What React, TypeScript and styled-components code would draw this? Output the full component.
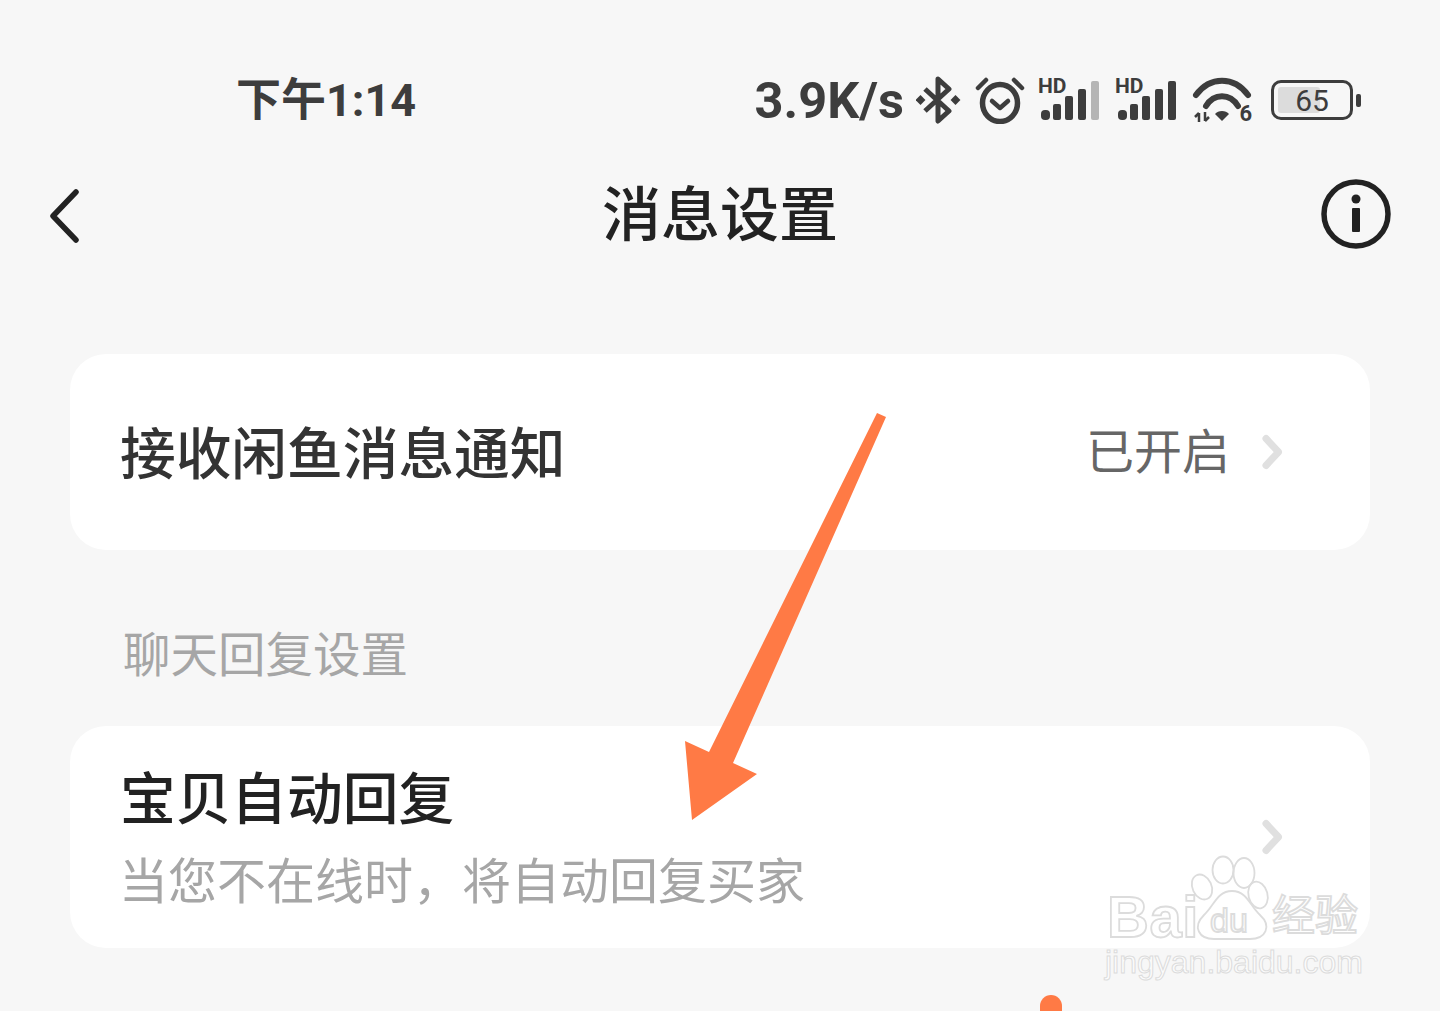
import styled, { createGlobalStyle } from "styled-components";

const GlobalStyle = createGlobalStyle`
  html, body {
    margin: 0;
    padding: 0;
    background: #f7f7f7;
  }
  body {
    font-family: "Noto Sans CJK SC", "Noto Sans", sans-serif;
  }
`;

const App = () => {
  return (
    <Page>
      <GlobalStyle />
      <StatusBar>
        <Time>下午1:14</Time>
        <StatusRight>
          <Speed>3.9K/s</Speed>
          <BluetoothIcon />
          <AlarmIcon />
          <SignalIcon dim />
          <SignalIcon />
          <WifiIcon />
          <Battery>
            <BatteryFill />
            <BatteryText>65</BatteryText>
          </Battery>
          <BatteryCap />
        </StatusRight>
      </StatusBar>

      <NavBar>
        <svg width="34" height="58" viewBox="0 0 34 58">
          <path d="M27 7 L4 31 L27 55" fill="none" stroke="#222" strokeWidth="5.5" strokeLinecap="round" strokeLinejoin="round" />
        </svg>
        <Title>消息设置</Title>
        <InfoSlot>
          <svg width="70" height="70" viewBox="0 0 70 70">
            <circle cx="35" cy="35" r="32" fill="none" stroke="#222" strokeWidth="5.5" />
            <circle cx="35" cy="20" r="4.5" fill="#222" />
            <rect x="31" y="29" width="8" height="24" rx="1" fill="#222" />
          </svg>
        </InfoSlot>
      </NavBar>

      <Card $height={196} $top={86}>
        <RowTitle>接收闲鱼消息通知</RowTitle>
        <RowRight>
          <RowValue>已开启</RowValue>
          <Chevron />
        </RowRight>
      </Card>

      <SectionLabel>聊天回复设置</SectionLabel>

      <Card $height={222} $top={0}>
        <RowText>
          <RowTitle $dark>宝贝自动回复</RowTitle>
          <RowDesc>当您不在线时，将自动回复买家</RowDesc>
        </RowText>
        <Chevron />
      </Card>

      <Overlay width="1440" height="1011" viewBox="0 0 1440 1011">
        <polygon points="877,413 886,417 733,763 757,774 692,820 685,741 709,752" fill="#ff7a45" />
        <circle cx="1051" cy="1006" r="11" fill="#ff7a45" />
        <rect x="1040" y="1006" width="22" height="6" fill="#ff7a45" />
        <g fill="none" stroke="#dcdcdc" strokeWidth="1.8">
          <ellipse cx="1202" cy="887" rx="9.5" ry="13" transform="rotate(-25 1202 887)" />
          <ellipse cx="1223" cy="870" rx="10.5" ry="13.5" />
          <ellipse cx="1244" cy="873" rx="10.5" ry="15" />
          <ellipse cx="1258" cy="895" rx="9.5" ry="13.5" transform="rotate(-15 1258 895)" />
          <path d="M1232 891 C1217 891 1214 906 1204 915 C1192 927 1199 939 1214 939 L1250 939 C1266 939 1272 926 1260 915 C1250 906 1247 891 1232 891 Z" />
        </g>
      </Overlay>

      <MarkBaidu>Bai</MarkBaidu>
      <MarkDu>du</MarkDu>
      <MarkCn>经验</MarkCn>
      <MarkUrl>jingyan.baidu.com</MarkUrl>
    </Page>
  );
};

export default App;

const BluetoothIcon = () => (
  <svg width="46" height="48" viewBox="0 0 46 48">
    <path d="M9 13 L33 35 L22 45 L22 3 L33 13 L9 35" fill="none" stroke="#3d3d3d" strokeWidth="5" strokeLinejoin="round" />
    <rect x="1" y="20.5" width="7" height="7" transform="rotate(45 4.5 24)" fill="#3d3d3d" />
    <rect x="36" y="20.5" width="7" height="7" transform="rotate(45 39.5 24)" fill="#3d3d3d" />
  </svg>
);

const AlarmIcon = () => (
  <svg width="50" height="48" viewBox="0 0 50 48">
    <ellipse cx="25" cy="27" rx="17.5" ry="18.5" fill="none" stroke="#3d3d3d" strokeWidth="5.5" />
    <path d="M17 25 L25 32 L33 25" fill="none" stroke="#3d3d3d" strokeWidth="4.5" strokeLinecap="round" strokeLinejoin="round" />
    <path d="M3 12 L11 4 M47 12 L39 4" stroke="#3d3d3d" strokeWidth="4.5" strokeLinecap="round" />
  </svg>
);

const SignalIcon = ({ dim }: { dim?: boolean }) => (
  <SignalWrap>
    <HdLabel>HD</HdLabel>
    <svg width="64" height="42" viewBox="0 0 64 42">
      <rect x="3" y="30" width="9" height="10" rx="4" fill="#3d3d3d" />
      <rect x="15" y="24" width="8" height="16" rx="2" fill="#3d3d3d" />
      <rect x="27" y="16" width="8" height="24" rx="2" fill="#3d3d3d" />
      <rect x="40" y="9" width="8" height="31" rx="2" fill="#3d3d3d" />
      <rect x="53" y="1" width="8" height="39" rx="2" fill={dim ? "#b5b5b5" : "#3d3d3d"} />
    </svg>
  </SignalWrap>
);

const WifiIcon = () => (
  <WifiWrap>
    <svg width="60" height="48" viewBox="0 0 60 48">
      <path d="M4 19 C18 0 42 0 56 19" fill="none" stroke="#3d3d3d" strokeWidth="6" strokeLinecap="round" />
      <path d="M14 30 C22 17 38 17 46 30" fill="none" stroke="#3d3d3d" strokeWidth="6" strokeLinecap="round" />
      <path d="M23 38 C26 34 34 34 37 38 L30 45 Z" fill="#3d3d3d" />
      <path d="M7 37 V46 M3 41 L7 37 M13 36 V45 M17 41 L13 45" fill="none" stroke="#3d3d3d" strokeWidth="2.5" />
    </svg>
    <WifiBand>6</WifiBand>
  </WifiWrap>
);

const Chevron = () => (
  <svg width="24" height="38" viewBox="0 0 24 38">
    <path d="M6 5.5 L18.5 19 L6 32.5" fill="none" stroke="#e0e0e0" strokeWidth="7" strokeLinecap="round" strokeLinejoin="round" />
  </svg>
);

const Page = styled.div`
  position: relative;
  width: 1440px;
  height: 1011px;
  overflow: hidden;
  background: #f7f7f7;
  padding: 0 70px;
  box-sizing: border-box;
`;

const StatusBar = styled.div`
  margin: 0 -70px;
  padding: 40px 79px 0 238px;
  box-sizing: border-box;
  height: 160px;
  display: flex;
  align-items: center;
  justify-content: space-between;
`;

const Time = styled.span`
  font-family: "Roboto", "Noto Sans CJK SC", sans-serif;
  font-size: 45px;
  font-weight: 700;
  color: #3d3d3d;
  margin-left: -2px;
  padding-bottom: 7px;
`;

const StatusRight = styled.div`
  display: flex;
  align-items: center;
  gap: 13px;
`;

const Speed = styled.span`
  font-family: "Roboto", sans-serif;
  font-size: 50.5px;
  font-weight: 700;
  color: #3d3d3d;
  margin-right: -1px;
`;

const SignalWrap = styled.div`
  position: relative;
  width: 64px;
  height: 44px;
  display: flex;
  align-items: flex-end;
`;

const HdLabel = styled.span`
  position: absolute;
  left: 0;
  top: -4px;
  font-family: "Roboto", sans-serif;
  font-size: 21px;
  line-height: 24px;
  font-weight: 700;
  color: #3d3d3d;
`;

const WifiWrap = styled.div`
  position: relative;
  width: 60px;
  height: 48px;
  display: flex;
`;

const WifiBand = styled.span`
  position: absolute;
  right: 0;
  bottom: 0;
  font-family: "Roboto", sans-serif;
  font-size: 22px;
  line-height: 20px;
  font-weight: 700;
  color: #3d3d3d;
`;

const Battery = styled.div`
  position: relative;
  width: 76px;
  height: 34px;
  border: 3px solid #3d3d3d;
  border-radius: 10px;
  margin-left: 6px;
  display: flex;
  align-items: center;
  justify-content: center;
`;

const BatteryFill = styled.div`
  position: absolute;
  left: 4px;
  top: 4px;
  bottom: 4px;
  width: 42px;
  background: #dcdcdc;
  border-radius: 3px;
`;

const BatteryText = styled.span`
  position: relative;
  font-family: "Roboto", sans-serif;
  font-size: 30px;
  font-weight: 400;
  color: #3d3d3d;
`;

const BatteryCap = styled.div`
  width: 5px;
  height: 13px;
  background: #3d3d3d;
  border-radius: 2px;
  margin-left: -10px;
`;

const NavBar = styled.div`
  height: 108px;
  margin: 0 -70px;
  padding: 0 49px;
  display: grid;
  grid-template-columns: 1fr auto 1fr;
  align-items: center;
`;

const Title = styled.h1`
  margin: 0;
  padding-bottom: 8px;
  font-size: 59px;
  font-weight: 500;
  color: #222;
`;

const InfoSlot = styled.div`
  display: flex;
  justify-content: flex-end;
`;

const Card = styled.div<{ $height: number; $top: number }>`
  height: ${({ $height }) => $height}px;
  margin-top: ${({ $top }) => $top}px;
  background: #fff;
  border-radius: 36px;
  padding: 0 86px 0 50px;
  display: flex;
  align-items: center;
  justify-content: space-between;
`;

const RowTitle = styled.div<{ $dark?: boolean }>`
  font-size: 55.7px;
  line-height: 70px;
  font-weight: 500;
  color: ${({ $dark }) => ($dark ? "#222" : "#333")};
  padding-bottom: 4px;
`;

const RowRight = styled.div`
  display: flex;
  align-items: center;
  gap: 30px;
`;

const RowValue = styled.span`
  font-size: 48px;
  line-height: 64px;
  padding-bottom: 8px;
  color: #666;
`;

const RowText = styled.div`
  display: flex;
  flex-direction: column;
  gap: 14px;
  padding-bottom: 6px;
`;

const RowDesc = styled.div`
  font-size: 49px;
  line-height: 60px;
  margin-left: -1px;
  color: #a6a6a6;
`;

const SectionLabel = styled.div`
  height: 176px;
  box-sizing: border-box;
  padding: 69px 0 0 53px;
  font-size: 47.5px;
  line-height: 66px;
  color: #a6a6a6;
`;

const Overlay = styled.svg`
  position: absolute;
  left: 0;
  top: 0;
`;

const Mark = styled.span`
  position: absolute;
  color: rgba(255, 255, 255, 0.6);
  -webkit-text-stroke: 1.8px #dcdcdc;
  font-family: "Liberation Sans", sans-serif;
  line-height: 1;
`;

const MarkBaidu = styled(Mark)`
  left: 1107px;
  top: 888px;
  font-size: 58px;
  font-weight: 700;
  letter-spacing: 0.5px;
`;

const MarkDu = styled(Mark)`
  left: 1210px;
  top: 903px;
  font-size: 34px;
`;

const MarkCn = styled(Mark)`
  left: 1272px;
  top: 891px;
  font-size: 43px;
  font-family: "Noto Sans CJK SC", sans-serif;
`;

const MarkUrl = styled(Mark)`
  left: 1105px;
  top: 946px;
  font-size: 32px;
  -webkit-text-stroke-width: 1px;
`;
